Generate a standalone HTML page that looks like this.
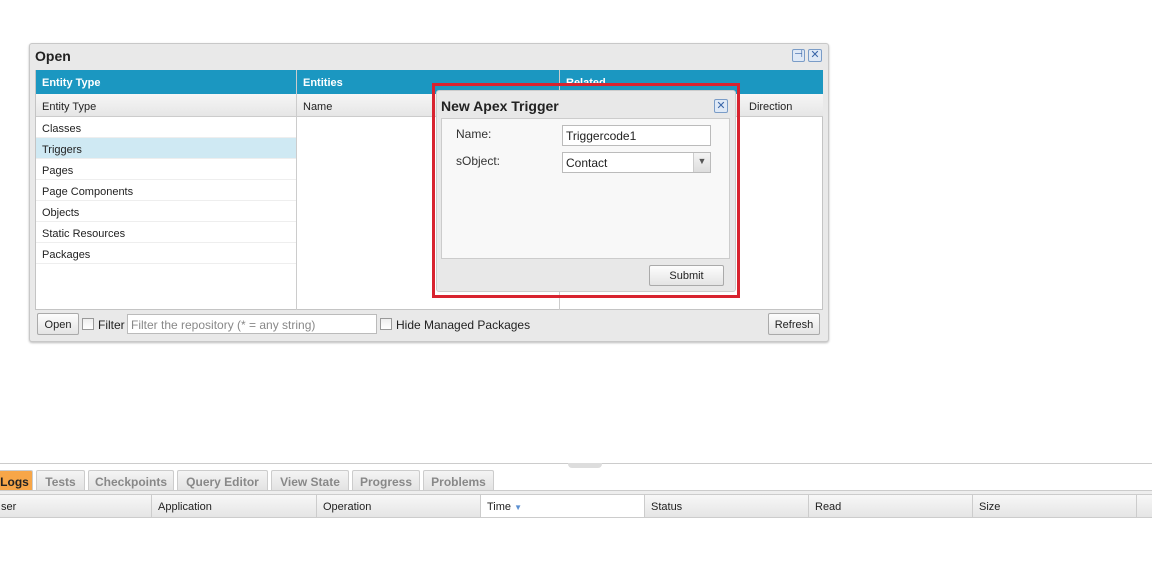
<!DOCTYPE html>
<html><head><style>
*{box-sizing:border-box;margin:0;padding:0}
body{width:1152px;height:582px;background:#fff;font-family:"Liberation Sans","DejaVu Sans",sans-serif;font-size:11px;color:#222;position:relative;overflow:hidden}
.a{position:absolute}
.win{left:29px;top:43px;width:800px;height:299px;background:#e9e9e9;border:1px solid #c8c8c8;border-radius:3px;box-shadow:0 1px 2px #bbb}
.bh{background:#1b97c1;color:#fff;font-weight:bold;font-size:11px;height:24px;line-height:26px;padding-left:6px;top:70px}
.sh{top:94px;height:23px;line-height:26px;background:linear-gradient(#f6f6f6,#e6e6e6);border-bottom:1px solid #ccc;padding-left:6px}
.row{left:36px;width:260px;height:21px;line-height:24px;padding-left:6px;border-bottom:1px solid #eee;background:#fff}
.btn{background:linear-gradient(#fdfdfd,#e4e4e4);border:1px solid #aaa;border-radius:2px;text-align:center;font-size:11px}
.cb{width:12px;height:12px;border:1px solid #999;background:linear-gradient(#eee,#fff)}
.tab{top:470px;height:21px;line-height:22px;background:linear-gradient(#f4f4f4,#e2e2e2);border:1px solid #ccc;border-bottom:none;color:#888;font-weight:bold;font-size:12px;text-align:center;border-radius:2px 2px 0 0}
.gh{top:494px;height:24px;line-height:24px;background:linear-gradient(#f7f7f7,#e5e5e5);border:1px solid #ccc;border-left:none;padding-left:6px}
</style></head><body>
<div class="a win"></div>
<div class="a" style="left:35px;top:48px;font-size:14px;font-weight:bold">Open</div>
<div class="a" style="left:792px;top:49px;width:13px;height:13px;border:1px solid #7a9cc7;border-radius:2px;background:#dfe9f6;color:#3a66a8;font-size:10px;line-height:10px;text-align:center">⊣</div>
<div class="a" style="left:808px;top:49px;width:14px;height:13px;border:1px solid #7a9cc7;border-radius:2px;background:#dfe9f6;color:#3a66a8;font-size:11px;line-height:11px;text-align:center">✕</div>
<div class="a" style="left:35px;top:70px;width:788px;height:240px;background:#fff;border:1px solid #c4c4c4"></div>
<div class="a bh" style="left:36px;width:260px">Entity Type</div>
<div class="a bh" style="left:297px;width:262px">Entities</div>
<div class="a bh" style="left:560px;width:263px">Related</div>
<div class="a sh" style="left:36px;width:260px">Entity Type</div>
<div class="a sh" style="left:297px;width:262px">Name</div>
<div class="a sh" style="left:560px;width:263px;padding-left:189px">Direction</div>
<div class="a" style="left:296px;top:70px;width:1px;height:240px;background:#ccc"></div>
<div class="a" style="left:559px;top:70px;width:1px;height:240px;background:#ccc"></div>
<div class="a row" style="top:117px">Classes</div>
<div class="a row" style="top:138px;background:#cfe9f3">Triggers</div>
<div class="a row" style="top:159px">Pages</div>
<div class="a row" style="top:180px">Page Components</div>
<div class="a row" style="top:201px">Objects</div>
<div class="a row" style="top:222px">Static Resources</div>
<div class="a row" style="top:243px">Packages</div>
<div class="a btn" style="left:37px;top:313px;width:42px;height:22px;line-height:22px">Open</div>
<div class="a cb" style="left:82px;top:318px"></div>
<div class="a" style="left:98px;top:318px;font-size:12px">Filter</div>
<div class="a" style="left:127px;top:314px;width:250px;height:20px;border:1px solid #bbb;background:#fff;color:#888;font-size:12px;line-height:20px;padding-left:3px">Filter the repository (* = any string)</div>
<div class="a cb" style="left:380px;top:318px"></div>
<div class="a" style="left:396px;top:318px;font-size:12px">Hide Managed Packages</div>
<div class="a btn" style="left:768px;top:313px;width:52px;height:22px;line-height:22px">Refresh</div>
<div class="a" style="left:432px;top:83px;width:308px;height:215px;border:3px solid #d8232f"></div>
<div class="a" style="left:436px;top:90px;width:300px;height:202px;background:#e8e8e8;border:1px solid #ccc;border-radius:3px"></div>
<div class="a" style="left:441px;top:98px;font-size:14px;font-weight:bold">New Apex Trigger</div>
<div class="a" style="left:714px;top:99px;width:14px;height:14px;border:1px solid #7a9cc7;border-radius:2px;background:#dfe9f6;color:#3a66a8;font-size:11px;line-height:12px;text-align:center">✕</div>
<div class="a" style="left:441px;top:118px;width:289px;height:141px;background:#f8f8f8;border:1px solid #ccc"></div>
<div class="a" style="left:456px;top:127px;font-size:12px;color:#333">Name:</div>
<div class="a" style="left:562px;top:125px;width:149px;height:21px;border:1px solid #bbb;background:#fff;font-size:12px;line-height:21px;padding-left:3px">Triggercode1</div>
<div class="a" style="left:456px;top:154px;font-size:12px;color:#333">sObject:</div>
<div class="a" style="left:562px;top:152px;width:149px;height:21px;border:1px solid #bbb;background:#fff;font-size:12px;line-height:21px;padding-left:3px">Contact</div>
<div class="a" style="left:693px;top:153px;width:17px;height:19px;background:linear-gradient(#f4f4f4,#ddd);border-left:1px solid #ccc;font-size:9px;text-align:center;line-height:17px;color:#555">▼</div>
<div class="a btn" style="left:649px;top:265px;width:75px;height:21px;line-height:21px">Submit</div>
<div class="a" style="left:0;top:463px;width:1152px;height:1px;background:#ccc"></div>
<div class="a" style="left:568px;top:463px;width:34px;height:5px;background:#ddd;border-radius:0 0 4px 4px"></div>
<div class="a tab" style="left:-4px;width:37px;background:#f7a648;color:#222">Logs</div>
<div class="a tab" style="left:36px;width:49px">Tests</div>
<div class="a tab" style="left:88px;width:86px">Checkpoints</div>
<div class="a tab" style="left:177px;width:91px">Query Editor</div>
<div class="a tab" style="left:271px;width:78px">View State</div>
<div class="a tab" style="left:352px;width:68px">Progress</div>
<div class="a tab" style="left:423px;width:71px">Problems</div>
<div class="a" style="left:0;top:490px;width:1152px;height:4px;background:#eee;border-top:1px solid #ccc"></div>
<div class="a gh" style="left:-5px;width:157px">ser</div>
<div class="a gh" style="left:152px;width:165px">Application</div>
<div class="a gh" style="left:317px;width:164px">Operation</div>
<div class="a gh" style="left:481px;width:164px;background:#fff">Time <span style="color:#5b8fd1;font-size:8px">▼</span></div>
<div class="a gh" style="left:645px;width:164px">Status</div>
<div class="a gh" style="left:809px;width:164px">Read</div>
<div class="a gh" style="left:973px;width:164px">Size</div>
<div class="a gh" style="left:1137px;width:20px"></div>
</body></html>
